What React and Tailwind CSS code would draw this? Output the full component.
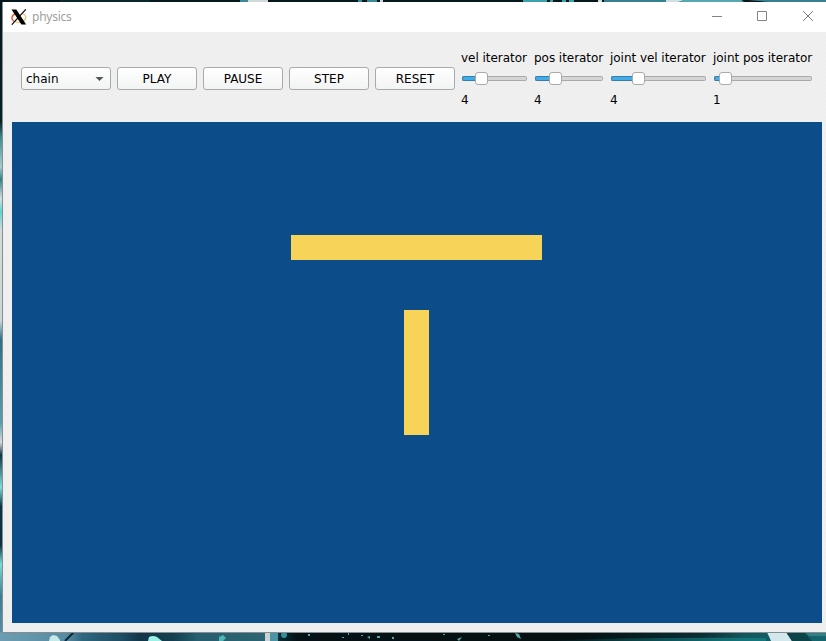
import React from "react";

function Wallpaper() {
  return (
    <svg className="absolute inset-0 h-full w-full" viewBox="0 0 826 641" preserveAspectRatio="none">
      <defs>
        <linearGradient id="side" x1="0" y1="0" x2="0" y2="1">
          <stop offset="0" stopColor="#03181c" />
          <stop offset="0.19" stopColor="#082126" />
          <stop offset="0.215" stopColor="#3c8d90" />
          <stop offset="0.26" stopColor="#a9cdd0" />
          <stop offset="0.28" stopColor="#2f7f84" />
          <stop offset="0.31" stopColor="#d5e0e2" />
          <stop offset="0.33" stopColor="#5fd3d3" />
          <stop offset="0.36" stopColor="#d3dbdc" />
          <stop offset="0.5" stopColor="#cbd6d8" />
          <stop offset="0.53" stopColor="#2d6f86" />
          <stop offset="0.66" stopColor="#5b9db0" />
          <stop offset="0.69" stopColor="#d5dcdd" />
          <stop offset="0.71" stopColor="#0d3548" />
          <stop offset="0.76" stopColor="#7de0dd" />
          <stop offset="0.79" stopColor="#0c3548" />
          <stop offset="0.85" stopColor="#0c3044" />
          <stop offset="0.88" stopColor="#78dcd8" />
          <stop offset="0.93" stopColor="#3c7c94" />
          <stop offset="1" stopColor="#5d93a8" />
        </linearGradient>
        <linearGradient id="bottom">
          <stop offset="0" stopColor="#6c9db3" />
          <stop offset="0.08" stopColor="#588ba2" />
          <stop offset="0.1" stopColor="#2f667f" />
          <stop offset="0.15" stopColor="#1d4b62" />
          <stop offset="0.17" stopColor="#12354a" />
          <stop offset="0.21" stopColor="#143f50" />
          <stop offset="0.24" stopColor="#285f70" />
          <stop offset="0.32" stopColor="#2c6473" />
          <stop offset="0.34" stopColor="#0a2a33" />
          <stop offset="0.36" stopColor="#051114" />
          <stop offset="0.7" stopColor="#041012" />
          <stop offset="0.85" stopColor="#0a2e32" />
          <stop offset="0.9" stopColor="#12575e" />
          <stop offset="1" stopColor="#16666e" />
        </linearGradient>
        <linearGradient id="glow">
          <stop offset="0" stopColor="#15777c" stopOpacity="0" />
          <stop offset="1" stopColor="#15777c" />
        </linearGradient>
      </defs>
      <rect width="826" height="641" fill="#04181b" />
      <rect width="3" height="641" fill="url(#side)" />
      <rect y="632" width="826" height="9" fill="url(#bottom)" />
      <path d="M60 0h90v2H60z" fill="#0a292d" />
      <path d="M240 0h8v2h-8zM358 0h4v2h-4zM367 0h10v2h-10z" fill="#3a8b99" />
      <path d="M248 0h20v2h-20zM380 0h3v2h-3z" fill="#d0d8da" />
      <path d="M523 0h24v2h-24zM550 0h3v2h-3zM562 0h4v2h-4zM569 0h5v2h-5z" fill="#3aa2aa" />
      <path d="M604 0h222v2H604z" fill="#35818f" />
      <path d="M598 0h4v2h-4zM666 0h18l-6 2h-12z" fill="#d0dfe1" />
      <path d="M684 0h58v2h-62z" fill="#58a6ae" />
      <path d="M742 0h6l20 2h-24z" fill="#07171b" />
      <path d="M74 632l-9 9" stroke="#0b2939" strokeWidth="2" />
      <path d="M50 637l3-2 4 1 3 4v1H49z" fill="#c5e9e7" />
      <path d="M149 637q4-2 8 0l5 4h-14z" fill="#9df0e6" />
      <path d="M219 637l4-2 3 3-3 3h-4z" fill="#4eb5b5" />
      <path d="M265 632h5v9h-5z" fill="#c9d2d5" />
      <path d="M270 632h8v9h-8z" fill="#4c93a5" />
      <circle cx="284" cy="635" r="3" fill="#368f96" />
      <path d="M308 634h2v2h-2zM342 637h2v1h-2zM348 633h1v2h-1zM361 635h2v1h-2zM367 637l3-1v3zM377 636h3v2h-3zM392 637h2v2h-2zM422 632h8v1h-8zM443 634h2v1h-2zM457 639l5-2-3 4zM488 635h2v1h-2zM515 633l4 1 2 5-4-2z" fill="#54a8a8" />
      <path d="M546 641q80-4 220-3v3z" fill="url(#glow)" />
      <path d="M767 632h19l6 9h-21z" fill="#d3e8ec" />
      <path d="M786 632h18l8 9h-20z" fill="#0d444a" />
      <path d="M805 632h21v4h-17z" fill="#347f86" />
    </svg>
  );
}

function TitleBar() {
  return (
    <header className="flex h-[30px] items-center bg-white pl-2">
      <svg className="h-4 w-4" viewBox="0 0 16 16">
        <path d="M5 4.5C0 6 .1 11 3 12" fill="none" stroke="#e8532d" strokeWidth="1.4" />
        <path d="M3 12C7 15 15 12 14.8 8.5 14.7 6 13 5 11 4.5" fill="none" stroke="#f2b65a" strokeWidth="1.1" />
        <path d="M.5.5h4.8L15.2 15.5h-4.8z" fill="#000" />
        <path d="M14.8.3L.8 15.7" stroke="#000" strokeWidth="1.1" />
      </svg>
      <span className="ml-[5px] font-['Noto_Sans',sans-serif] text-[12px] leading-4 tracking-[-0.25px] text-[#a0a0a0]">physics</span>
      <svg className="ml-auto h-[30px] w-[115px]" viewBox="0 0 115 30" fill="none" stroke="#858585">
        <path d="M1 14.5h10M46.500 9.500h9v9h-9zM92 9l10 10M102 9L92 19" />
      </svg>
    </header>
  );
}

const frame = "rounded-[3px] border border-[#aaa] bg-linear-to-b from-white to-[#f2f3f3]";

function PushButton({ children }) {
  return <button className={`h-[23px] w-20 shrink-0 pt-px text-[12px] leading-4 ${frame}`}>{children}</button>;
}

function LabeledSlider({ label, value, width, handle }) {
  return (
    <div className="flex shrink-0 flex-col" style={{ width }}>
      <span className="h-4 text-[12px] leading-4 tracking-[-0.04px] whitespace-nowrap">{label}</span>
      <div className="mt-[5px] flex h-[15px] items-center pr-px pl-px">
        <div className="h-[5px] rounded-l-[2px] border border-r-0 border-[#397aa8] bg-[#3daee9]" style={{ width: handle }} />
        <div className="h-[13px] w-[13px] shrink-0 rounded-[3px] border border-[#aaa] bg-white" />
        <div className="h-[5px] flex-1 rounded-r-[2px] border border-l-0 border-[#aaa] bg-[#d5d5d5]" />
      </div>
      <span className="mt-[6px] h-4 text-[12px] leading-4">{value}</span>
    </div>
  );
}

function Toolbar() {
  return (
    <div className="flex h-[90px] items-center gap-[6px] pt-[3px] pl-[18px]">
      <button className={`flex h-[23px] w-[90px] shrink-0 items-center justify-between pt-px pr-[6px] pl-1 text-[12px] leading-4 ${frame}`}>
        chain
        <svg className="mb-px h-1 w-[9px]" viewBox="0 0 9 4">
          <path d="M.5 0h8l-4 4z" fill="#555" />
        </svg>
      </button>
      <PushButton>PLAY</PushButton>
      <PushButton>PAUSE</PushButton>
      <PushButton>STEP</PushButton>
      <PushButton>RESET</PushButton>
      <div className="flex gap-[6px]">
        <LabeledSlider label="vel iterator" value="4" width={67} handle={13} />
        <LabeledSlider label="pos iterator" value="4" width={70} handle={14} />
        <LabeledSlider label="joint vel iterator" value="4" width={97} handle={21} />
        <LabeledSlider label="joint pos iterator" value="1" width={100} handle={5} />
      </div>
    </div>
  );
}

export default function App() {
  return (
    <div className="relative h-[641px] w-[826px] overflow-hidden font-['DejaVu_Sans',sans-serif] text-black">
      <Wallpaper />
      <div className="relative pt-[2px] pl-[2px]">
        <main className="h-[631px] w-[824px] border-b border-l border-[#858d8f] bg-[#edeeee] bg-[conic-gradient(#f8f8f8_90deg,transparent_90deg_180deg,#f8f8f8_180deg_270deg,transparent_270deg)] bg-[size:4px_4px]">
          <div className="h-full bg-[#edeeee]/75">
            <TitleBar />
            <Toolbar />
            <div className="ml-[9px] flex h-[501px] w-[810px] flex-col bg-[#0c4d89] pt-[113px]">
              <div className="ml-[279px] h-[25px] w-[251px] bg-[#f7d358]" />
              <div className="mt-[50px] ml-[392px] h-[125px] w-[25px] bg-[#f7d358]" />
            </div>
          </div>
        </main>
      </div>
    </div>
  );
}
